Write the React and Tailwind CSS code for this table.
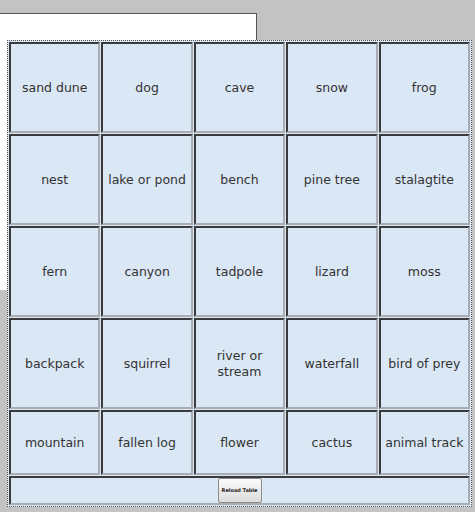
import React from 'react';

const items = [
    'sand dune', 'dog', 'cave', 'snow', 'frog',
    'nest', 'lake or pond', 'bench', 'pine tree', 'stalagtite',
    'fern', 'canyon', 'tadpole', 'lizard', 'moss',
    'backpack', 'squirrel', 'river or stream', 'waterfall', 'bird of prey',
    'mountain', 'fallen log', 'flower', 'cactus', 'animal track',
];

function Cell({ label, short }) {
    return (
        <div
            className={`flex items-center justify-center text-center bg-[#dae7f5] text-[#333] text-[12.5px] leading-[16px] whitespace-nowrap border-t-2 border-l-2 border-b-2 border-r-2 border-t-[#3a3a3a] border-l-[#3a3a3a] border-b-[#a9adb3] border-r-[#a9adb3] ${short ? 'h-[65px]' : 'h-[91px]'}`}
        >
            {label === 'river or stream' ? <span>river or<br />stream</span> : label}
        </div>
    );
}

export default function App() {
    return (
        <div className="relative w-[475px] h-[512px] bg-[#c3c3c3] overflow-hidden" style={{ fontFamily: '"DejaVu Sans", Verdana, sans-serif' }}>
            {/* white panel behind the board */}
            <div className="mt-[13px] w-[257px] h-[277px] bg-white border-t border-r border-[#555]" />

            {/* bingo board */}
            <div className="absolute left-[7px] top-[40px] w-[465px] border border-dotted border-[#555] bg-[#dae7f5] p-px">
                <div className="grid grid-cols-5 gap-px">
                    {items.map((label, i) => (
                        <Cell key={label} label={label} short={i >= 20} />
                    ))}
                    <div className="col-span-5 h-[29px] flex items-center justify-center bg-[#dae7f5] border-2 border-t-[#3a3a3a] border-l-[#3a3a3a] border-b-[#a9adb3] border-r-[#a9adb3]">
                        <button className="w-[44px] h-[25px] rounded-[2px] border border-[#8c8c8c] bg-gradient-to-b from-[#fafafa] to-[#dcdcdc] text-[5px] font-bold text-[#222] leading-none whitespace-nowrap">
                            Reload Table
                        </button>
                    </div>
                </div>
            </div>
        </div>
    );
}
